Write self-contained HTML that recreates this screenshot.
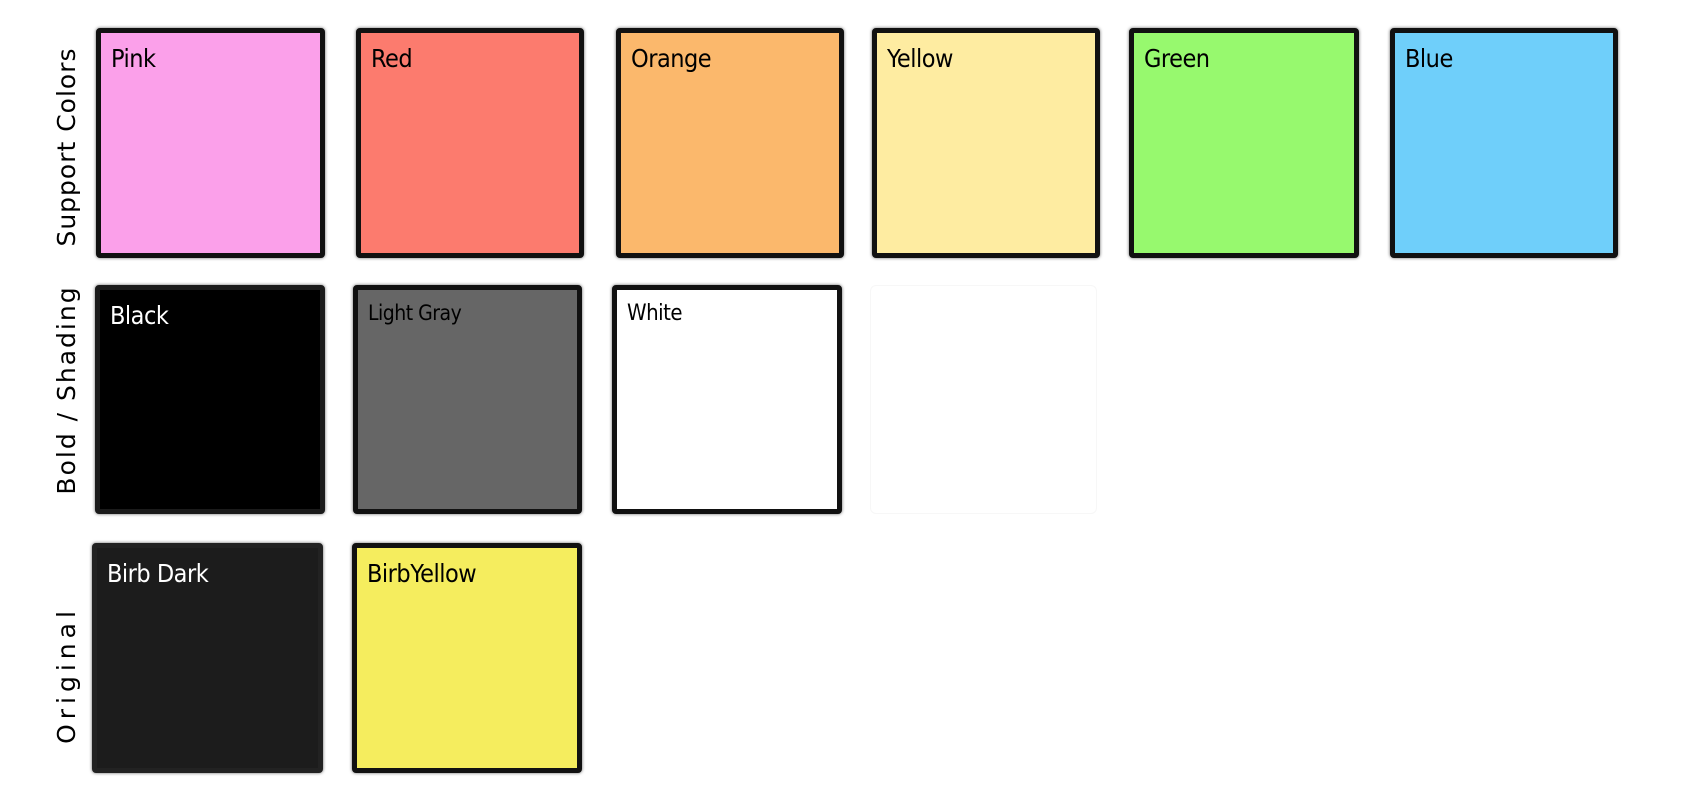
<!DOCTYPE html>
<html><head><meta charset="utf-8"><style>
html,body{margin:0;padding:0;background:#fff;width:1687px;height:810px;overflow:hidden;position:relative;font-family:"Liberation Sans","DejaVu Sans",sans-serif;}
.b{position:absolute;box-sizing:border-box;border:5px solid #111;border-radius:4px;box-shadow:0 0 3px rgba(0,0,0,.6);}
.b span{position:absolute;left:10px;top:11px;font-size:25px;font-family:"DejaVu Sans Condensed","Liberation Sans Narrow","Liberation Sans",sans-serif;color:#000;letter-spacing:-0.5px;}
.v{position:absolute;transform:rotate(-90deg);transform-origin:center center;font-size:25px;line-height:30px;height:30px;white-space:nowrap;letter-spacing:1px;color:#000;font-family:"DejaVu Sans","Liberation Sans",sans-serif;text-align:center;width:240px;left:-53px;}
</style></head><body>
<div class="v" style="top:132px;">Support Colors</div>
<div class="v" style="top:375px;letter-spacing:2px;">Bold / Shading</div>
<div class="v" style="top:660px;letter-spacing:5px;">Original</div>

<div class="b" style="left:96px;top:28px;width:229px;height:230px;background:#fba0ea"><span>Pink</span></div>
<div class="b" style="left:356px;top:28px;width:228px;height:230px;background:#fc7b6e"><span>Red</span></div>
<div class="b" style="left:616px;top:28px;width:228px;height:230px;background:#fbb86c"><span>Orange</span></div>
<div class="b" style="left:872px;top:28px;width:228px;height:230px;background:#feeca1"><span>Yellow</span></div>
<div class="b" style="left:1129px;top:28px;width:230px;height:230px;background:#97f96e"><span>Green</span></div>
<div class="b" style="left:1390px;top:28px;width:228px;height:230px;background:#6fcffa"><span>Blue</span></div>

<div class="b" style="left:95px;top:285px;width:230px;height:229px;background:#000;border-color:#1b1b1b"><span style="color:#fff">Black</span></div>
<div class="b" style="left:353px;top:285px;width:229px;height:229px;background:#666"><span style="font-size:21px">Light Gray</span></div>
<div class="b" style="left:612px;top:285px;width:230px;height:229px;background:#fff"><span style="font-size:22px">White</span></div>
<div style="position:absolute;left:870px;top:285px;width:227px;height:229px;border:1px solid #f7f7f7;border-radius:6px;box-sizing:border-box;"></div>

<div class="b" style="left:92px;top:543px;width:231px;height:230px;background:#1c1c1c;border-color:#222"><span style="color:#fff">Birb Dark</span></div>
<div class="b" style="left:352px;top:543px;width:230px;height:230px;background:#f5ed5e"><span>BirbYellow</span></div>
</body></html>
